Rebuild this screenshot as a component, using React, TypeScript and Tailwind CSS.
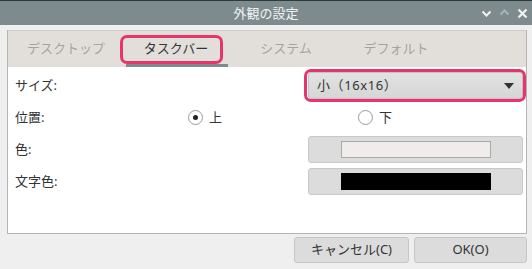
import React, { useState } from 'react'

const tabs = ['デスクトップ', 'タスクバー', 'システム', 'デフォルト'];

const Radio: React.FC<{ checked: boolean; label: string; onClick: () => void }> = ({ checked, label, onClick }) => (
  <button onClick={onClick} className="flex items-center gap-[6px] text-[#333]">
    <span className="w-[15px] h-[15px] rounded-full border border-[#9a9a9a] bg-white flex items-center justify-center">
      {checked && <span className="w-[5px] h-[5px] rounded-full bg-[#222]" />}
    </span>
    <span>{label}</span>
  </button>
);

const App: React.FC = () => {
  const [active, setActive] = useState(1);
  const [pos, setPos] = useState<'top' | 'bottom'>('top');

  return (
    <div className="w-[532px] h-[269px] bg-[#efefef] flex flex-col overflow-hidden text-[13px] font-['Noto_Sans','Noto_Sans_CJK_JP',sans-serif]">
      {/* Title bar */}
      <div className="h-[25px] shrink-0 bg-[#7d8b8f] border-t border-[#2e3a37] flex items-center text-[#f2f2f2]">
        <div className="w-[80px]" />
        <div className="flex-1 text-center leading-none pt-[1px]">外観の設定</div>
        <div className="w-[80px] flex items-center justify-end gap-[7px] pr-[4px]">
          <svg width="11" height="10" viewBox="0 0 11 10"><path d="M1.5 3.5 L5.5 7.5 L9.5 3.5" stroke="#f2f2f2" strokeWidth="2" fill="none" /></svg>
          <svg width="11" height="10" viewBox="0 0 11 10"><path d="M1.5 6.5 L5.5 2.5 L9.5 6.5" stroke="#a9b3b6" strokeWidth="2" fill="none" /></svg>
          <svg width="11" height="11" viewBox="0 0 11 11"><path d="M1.5 1.5 L9.5 9.5 M9.5 1.5 L1.5 9.5" stroke="#f2f2f2" strokeWidth="2.2" fill="none" /></svg>
        </div>
      </div>

      {/* Notebook */}
      <div className="pt-[5px] pl-[7px] pr-[5px]">
        <div className="border-l border-b border-r border-[#b4b4b4]">
          {/* Tab bar */}
          <div className="h-[37px] bg-[#e2dfdb] border-t border-[#cfcbc6] flex pl-[3px]">
            {tabs.map((t, i) => (
              <button
                key={t}
                onClick={() => setActive(i)}
                className={`relative w-[110px] flex items-center justify-center ${i === active ? 'text-[#333]' : 'text-[#a3a3a3]'}`}
              >
                {t}
                {i === active && (
                  <>
                    <span className="absolute left-[5px] right-[3px] bottom-0 h-[3px] bg-[#7d8b8f]" />
                    <span className="absolute left-[-1px] top-[4px] w-[103px] h-[29px] rounded-[7px] border-[3px] border-[#e8346c]" />
                  </>
                )}
              </button>
            ))}
          </div>

          {/* Page */}
          <div className="bg-white h-[166px] pt-[5px] pl-[7px]">
            <div className="grid grid-cols-[171px_122px_215px] auto-rows-[27px] gap-y-[5px] text-[#333]">
              <div className="flex items-center">サイズ:</div>
              <div />
              <div className="relative">
                <div className="h-full rounded-[3px] border border-[#c3c3c3] bg-gradient-to-b from-[#e2e2e2] to-[#d6d6d6] flex items-center justify-between pl-[8px] pr-[8px]">
                  <span className="tracking-[0.6px]">小（16x16）</span>
                  <svg width="10" height="6" viewBox="0 0 10 6"><path d="M0 0 L10 0 L5 6 Z" fill="#333" /></svg>
                </div>
                <span className="absolute -left-[4px] -right-[3px] -top-[3px] -bottom-[3px] rounded-[7px] border-[3px] border-[#e8346c]" />
              </div>

              <div className="flex items-center">位置:</div>
              <div className="flex items-center pl-[2px]">
                <Radio checked={pos === 'top'} label="上" onClick={() => setPos('top')} />
              </div>
              <div className="flex items-center pl-[50px]">
                <Radio checked={pos === 'bottom'} label="下" onClick={() => setPos('bottom')} />
              </div>

              <div className="flex items-center">色:</div>
              <div />
              <button className="rounded-[3px] border border-[#c8c8c8] bg-[#dcdcdc] flex items-center justify-center">
                <span className="w-[150px] h-[17px] bg-[#efeceb] border border-[#a9a9a9]" />
              </button>

              <div className="flex items-center">文字色:</div>
              <div />
              <button className="rounded-[3px] border border-[#c8c8c8] bg-[#dcdcdc] flex items-center justify-center">
                <span className="w-[150px] h-[17px] bg-black" />
              </button>
            </div>
          </div>
        </div>
      </div>

      {/* Buttons */}
      <div className="flex justify-end gap-[5px] pr-[5px] pt-[3px] text-[#333]">
        <button className="w-[115px] h-[26px] rounded-[3px] border border-[#c6c6c6] bg-[#dcdcdc]">キャンセル(C)</button>
        <button className="w-[113px] h-[26px] rounded-[3px] border border-[#c6c6c6] bg-[#dcdcdc]">OK(O)</button>
      </div>
    </div>
  )
}

export default App
